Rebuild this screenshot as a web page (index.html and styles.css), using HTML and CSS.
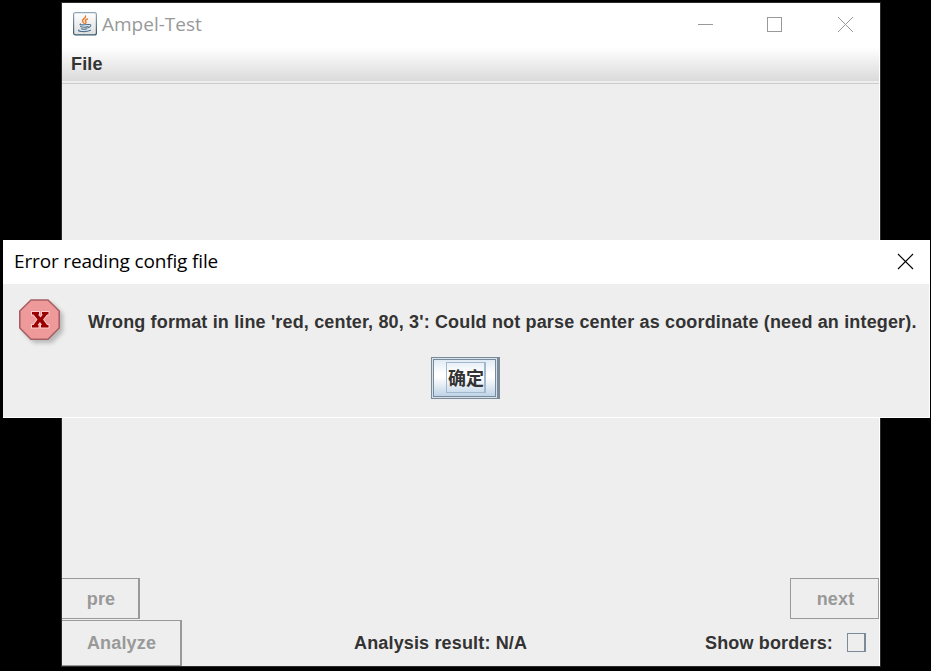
FILE: index.html
```
<!DOCTYPE html>
<html lang="en">
<head>
<meta charset="utf-8">
<title>Ampel-Test</title>
<link rel="stylesheet" href="styles.css">
</head>
<body>
<main class="window">
  <header class="titlebar">
    <svg class="java" width="24" height="24" viewBox="0 0 24 24">
      <defs><linearGradient id="tile" x1="0" y1="0" x2="0" y2="1"><stop offset="0" stop-color="#fff"/><stop offset="1" stop-color="#dedede"/></linearGradient>
      <linearGradient id="edge" x1="0" y1="0" x2="0" y2="1"><stop offset="0" stop-color="#91a8b8"/><stop offset="1" stop-color="#35596e"/></linearGradient></defs>
      <rect x=".6" y=".6" width="22.8" height="22.3" rx="2" fill="url(#tile)" stroke="url(#edge)" stroke-width="1.2"/>
      <g fill="none" stroke-linecap="round">
        <path d="M12.500 4c1 2-3.400 3-3 5 .2 1 1.200 1.500 1.600 2.500M14.500 7c-2 .8-2.700 1.600-1.600 2.800.5.600 0 1.200-.4 1.600" stroke="#e77b2c" stroke-width="1.400"/>
        <path d="M7.500 12c-1.800 1 1.500 1.200 7.500.5M7.500 14.600c1.500.7 5.500.6 7.500 0M8.300 16.700c1.800.7 4 .6 5.700 0M15.500 12.600c3.200-.8 2.800 2.200 0 3M6 18c-3 1.600 7.500 2.500 11.500.3" stroke="#4a7396" stroke-width="1.100"/>
      </g>
    </svg>
    <span class="title">Ampel-Test</span>
    <svg class="controls" width="158" height="18" viewBox="0 0 158 18" fill="none" stroke="#999" shape-rendering="crispEdges">
      <path d="M0 9.500h15M69.500 2.500h14v14h-14z"/>
      <path d="M140 2l15 15M155 2l-15 15" shape-rendering="auto"/>
    </svg>
  </header>
  <nav class="menubar"><span class="menu">File</span></nav>
  <section class="canvas"></section>
  <div class="nav-row">
    <button class="btn pre" disabled>pre</button>
    <button class="btn next" disabled>next</button>
  </div>
  <footer class="status-row">
    <button class="btn analyze" disabled>Analyze</button>
    <span class="result">Analysis result: N/A</span>
    <span class="borders">Show borders:</span>
    <span class="check"></span>
  </footer>
</main>
<section class="dialog" role="dialog">
  <header class="dialog-title">
    <span class="dialog-name">Error reading config file</span>
    <svg class="close" width="17" height="17" viewBox="0 0 17 17" fill="none" stroke="#000" stroke-width="1.100"><path d="M1 1l15 15M16 1L1 16"/></svg>
  </header>
  <div class="message-row">
    <svg class="error" width="52" height="52" viewBox="0 0 52 52">
      <path class="shade" d="M16 5h18l11 11v18L34 45H16L5 34V16z"/>
      <path d="M13.500 2h16.500l11.200 11v17L30 41.200H13L1.800 30V13L13 2z" fill="#ef9a9a" stroke="#a66065" stroke-width="1.600"/>
      <path d="M14 14h7v2.500h-1l2.500 3 2.500-3h-1V14h6.500v2.500H29l-4 5 4 5.500h1.500v2.500H23V27h1l-2-3-2.500 3h1v2.500H14V27h1.500l4-5.500-4-5H14z" fill="#900" stroke="#ffcaca" stroke-width="2" paint-order="stroke"/>
    </svg>
    <span class="message">Wrong format in line 'red, center, 80, 3': Could not parse center as coordinate (need an integer).</span>
  </div>
  <button class="ok"><span class="focus">确定</span></button>
</section>
</body>
</html>
```
FILE: styles.css
```
* { box-sizing: border-box; }
body {
  margin: 0;
  height: 671px;
  overflow: hidden;
  background: #000;
  font: bold 18px/20px "Liberation Sans", sans-serif;
  letter-spacing: .155px;
  color: #333;
  white-space: nowrap;
}
button { font: inherit; letter-spacing: inherit; padding: 0; margin: 0; border-radius: 0; }
.window {
  display: flex;
  flex-direction: column;
  width: 820px;
  height: 665px;
  margin: 2px 0 0 61px;
  border: 1px solid #2b2b2b;
  background: #eee;
  box-shadow: inset -1px 0 #fff;
}
.titlebar {
  display: flex;
  height: 44px;
  flex: none;
  padding-left: 11px;
  background: #fff;
}
.java { margin-top: 9px; }
.title {
  width: 120px;
  margin: 8px 0 0 5px;
  font: 19px/26px "Open Sans", sans-serif;
  letter-spacing: 0;
  color: #999;
}
.controls { margin: 12px 24px 0 auto; }
.menubar {
  height: 37px;
  flex: none;
  padding: 7px 0 0 9px;
  margin-right: 1px;
  border-bottom: 1px solid #ccc;
  background: linear-gradient(#fff, #dadada) 0 0 / 100% 34px no-repeat, #eee;
}
.canvas { flex: 1; }
.nav-row { display: flex; justify-content: space-between; height: 42px; padding-right: 1px; }
.btn { border: 1px solid #999; background: #eee; color: #999; }
.pre { width: 78px; height: 41px; border-left: 0; border-right-width: 2px; padding-left: 2px; }
.next { width: 89px; height: 41px; padding-left: 2px; }
.status-row { display: flex; height: 46px; }
.analyze { width: 120px; height: 46px; border-left: 0; border-right-width: 2px; padding-left: 1px; }
.result { width: 174px; margin: 13px 0 0 172px; }
.borders { margin: 13px 14px 0 auto; }
.check { width: 19px; height: 19px; margin: 13px 14px 0 0; border: 1px solid #7a8a99; border-right-width: 2px; }
.dialog {
  position: absolute;
  left: 3px;
  top: 240px;
  width: 927px;
  height: 178px;
  background: #eee;
  box-shadow: inset -1px -1px #fff;
}
.dialog-title {
  display: flex;
  height: 44px;
  padding: 8px 16px 0 11px;
  background: #fff;
}
.dialog-name { font: 19px/26px "Open Sans", sans-serif; letter-spacing: -.15px; color: #000; }
.close { margin: 5px 0 0 auto; }
.message-row { display: flex; height: 73px; padding: 14px 0 0 15px; }
.error { flex: none; }
.shade { fill: #777; opacity: .45; filter: blur(2px); }
.message { margin: 14px 0 0 18px; }
.ok {
  display: flex;
  width: 69px;
  height: 42px;
  margin-left: 428px;
  padding: 3px 0 0 14px;
  border: 1px solid #7a8a99;
  border-right-width: 3px;
  box-shadow: inset 0 0 0 1px #d5e1ed, inset 0 0 0 2px #7a8a99;
  background: linear-gradient(#dce8f3, #fff 38%, #fff 48%, #b8cfe5);
}
.focus {
  width: 40px;
  height: 31px;
  margin-top: 1px;
  padding-left: 1px;
  border: 1px solid #a3b8cc;
  border-right-width: 2px;
  font: bold 18px/29px "Noto Sans CJK SC", sans-serif;
  letter-spacing: 0;
  color: #333;
}
```
